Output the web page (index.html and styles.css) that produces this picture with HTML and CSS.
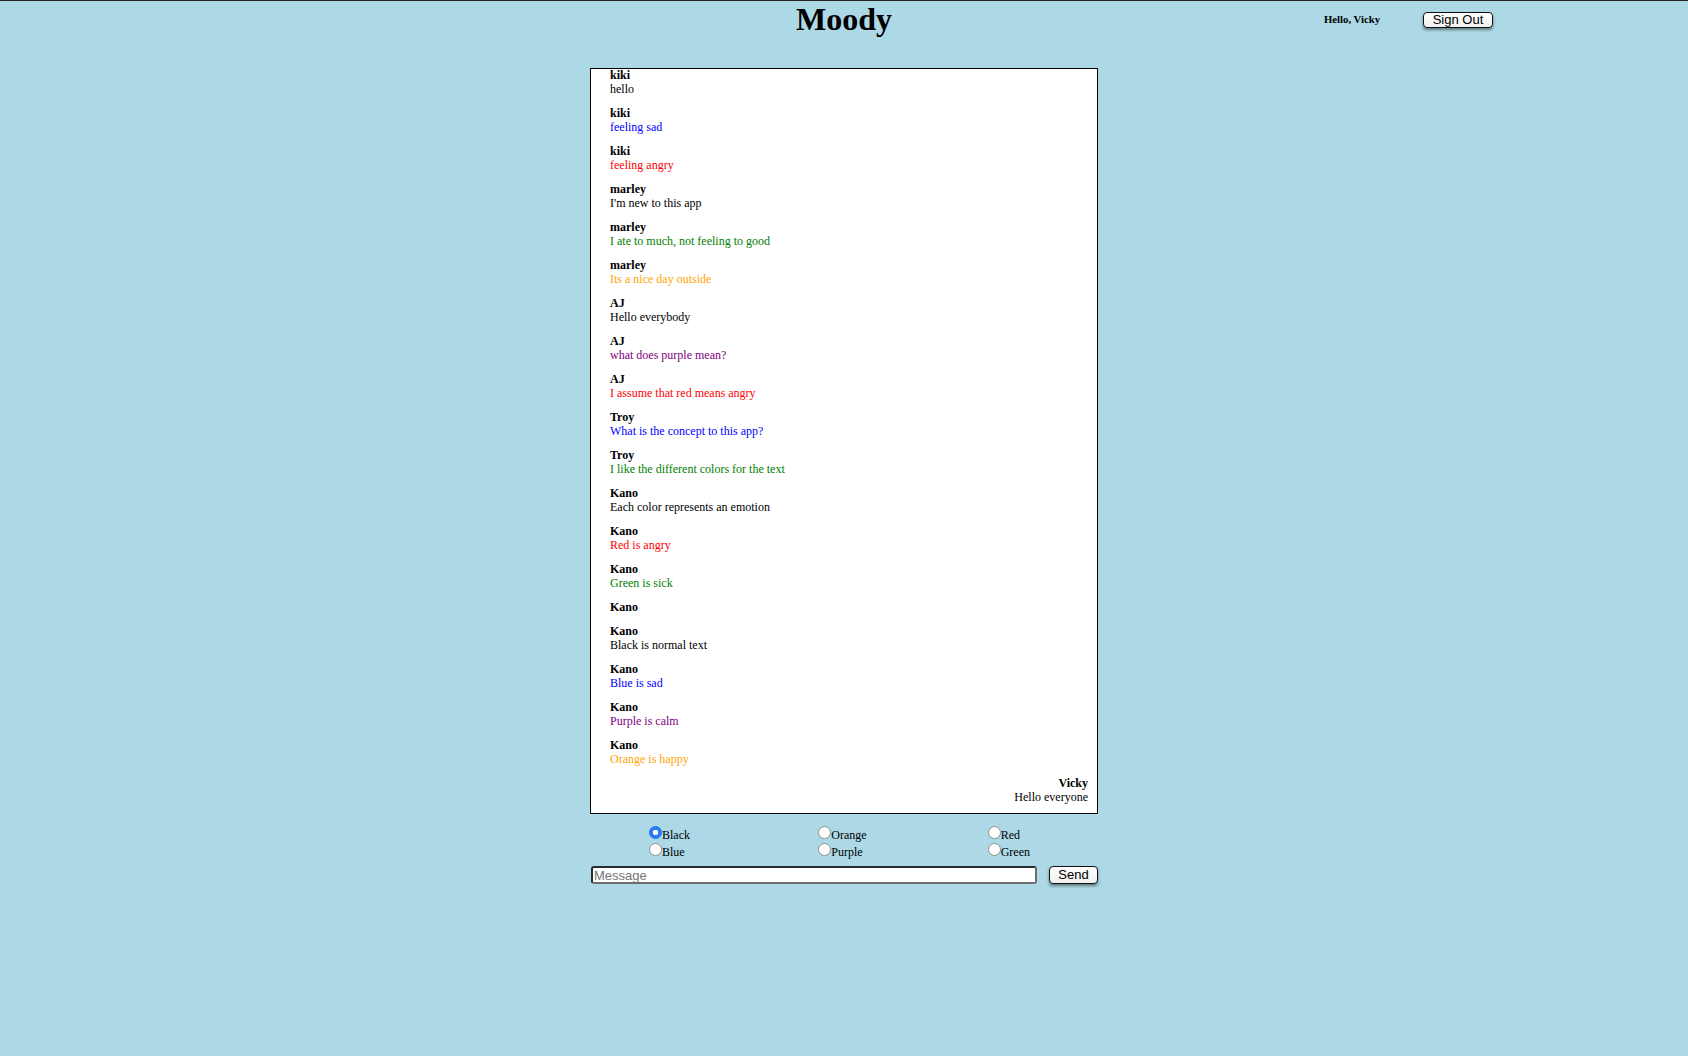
FILE: index.html
```html
<!DOCTYPE html>
<html lang="en">
<head>
<meta charset="utf-8">
<title>Moody</title>
<link rel="stylesheet" href="styles.css">
</head>
<body>
<header class="topbar">
  <div class="side"></div>
  <h1 class="title">Moody</h1>
  <div class="side user">
    <h6 class="hello">Hello, Vicky</h6>
    <button class="btn signout" type="button">Sign Out</button>
  </div>
</header>
<main class="app">
  <section class="chat">
    <div class="msg"><div class="name">kiki</div><div class="text c-black">hello</div></div>
    <div class="msg"><div class="name">kiki</div><div class="text c-blue">feeling sad</div></div>
    <div class="msg"><div class="name">kiki</div><div class="text c-red">feeling angry</div></div>
    <div class="msg"><div class="name">marley</div><div class="text c-black">I'm new to this app</div></div>
    <div class="msg"><div class="name">marley</div><div class="text c-green">I ate to much, not feeling to good</div></div>
    <div class="msg"><div class="name">marley</div><div class="text c-orange">Its a nice day outside</div></div>
    <div class="msg"><div class="name">AJ</div><div class="text c-black">Hello everybody</div></div>
    <div class="msg"><div class="name">AJ</div><div class="text c-purple">what does purple mean?</div></div>
    <div class="msg"><div class="name">AJ</div><div class="text c-red">I assume that red means angry</div></div>
    <div class="msg"><div class="name">Troy</div><div class="text c-blue">What is the concept to this app?</div></div>
    <div class="msg"><div class="name">Troy</div><div class="text c-green">I like the different colors for the text</div></div>
    <div class="msg"><div class="name">Kano</div><div class="text c-black">Each color represents an emotion</div></div>
    <div class="msg"><div class="name">Kano</div><div class="text c-red">Red is angry</div></div>
    <div class="msg"><div class="name">Kano</div><div class="text c-green">Green is sick</div></div>
    <div class="msg"><div class="name">Kano</div></div>
    <div class="msg"><div class="name">Kano</div><div class="text c-black">Black is normal text</div></div>
    <div class="msg"><div class="name">Kano</div><div class="text c-blue">Blue is sad</div></div>
    <div class="msg"><div class="name">Kano</div><div class="text c-purple">Purple is calm</div></div>
    <div class="msg"><div class="name">Kano</div><div class="text c-orange">Orange is happy</div></div>
    <div class="msg mine"><div class="name">Vicky</div><div class="text c-black">Hello everyone</div></div>
  </section>
  <form class="composer">
    <div class="colors">
      <label class="opt"><input type="radio" name="color" checked>Black</label>
      <label class="opt"><input type="radio" name="color">Orange</label>
      <label class="opt"><input type="radio" name="color">Red</label>
      <label class="opt"><input type="radio" name="color">Blue</label>
      <label class="opt"><input type="radio" name="color">Purple</label>
      <label class="opt"><input type="radio" name="color">Green</label>
    </div>
    <div class="sendrow">
      <input class="field" type="text" placeholder="Message">
      <button class="btn send" type="button">Send</button>
    </div>
  </form>
</main>
</body>
</html>
```
FILE: styles.css
```css
html, body {
  margin: 0;
  padding: 0;
}
body {
  background: #add8e6;
  border-top: 1px solid #222;
  font-family: "Liberation Serif", "Times New Roman", serif;
  font-size: 12px;
  line-height: 14px;
  color: #000;
  min-height: 1055px;
}
.topbar {
  display: grid;
  grid-template-columns: 1fr auto 1fr;
  height: 34px;
}
.title {
  margin: 0;
  padding-top: 1px;
  font-size: 32px;
  line-height: 34px;
  font-weight: bold;
  text-align: center;
}
.user {
  display: flex;
  justify-content: flex-end;
  align-items: flex-start;
  padding-top: 11px;
  padding-right: 195px;
  gap: 43px;
}
.hello {
  margin: 1px 0 0;
  font-size: 10.72px;
  line-height: 13px;
  font-weight: bold;
}
.btn {
  font-family: "Liberation Sans", Arial, sans-serif;
  font-size: 13px;
  line-height: 14px;
  height: 16px;
  padding: 0 8px;
  border: 1px solid #111;
  border-radius: 4px;
  background: linear-gradient(#ffffff, #f0f0f0);
  box-shadow: 0 2px 3px rgba(0, 0, 0, 0.45);
  color: #000;
  margin: 0;
}
.signout {
  width: 70px;
}
.app {
  width: 508px;
  margin: 33px auto 0;
}
.chat {
  box-sizing: border-box;
  height: 746px;
  border: 1px solid #000;
  background: #fff;
  overflow: hidden;
  display: flex;
  flex-direction: column;
  justify-content: flex-end;
  gap: 10px;
  padding: 0 9px 9px 19px;
}
.msg {
  flex: none;
}
.name {
  font-weight: bold;
}
.mine {
  text-align: right;
}
.c-black { color: #000; }
.c-blue { color: #0000ff; }
.c-red { color: #ff0000; }
.c-green { color: #008000; }
.c-orange { color: #ffa500; }
.c-purple { color: #800080; }
.composer {
  margin: 12px 0 0;
}
.colors {
  display: grid;
  grid-template-columns: repeat(3, 1fr);
  grid-auto-rows: 17px;
}
.opt {
  display: block;
  padding-left: 59px;
  line-height: 14px;
}
.opt input {
  -webkit-appearance: none;
  appearance: none;
  width: 13px;
  height: 13px;
  margin: 0;
  box-sizing: border-box;
  border: 1px solid #8e8e8e;
  border-radius: 50%;
  background: #fff;
  vertical-align: baseline;
}
.opt input:checked {
  border-color: #1c6fe8;
  background: radial-gradient(circle, #fff 0 2.4px, #2a7cf7 3px);
}
.sendrow {
  display: flex;
  align-items: flex-start;
  gap: 12px;
  margin-top: 6px;
}
.field {
  box-sizing: border-box;
  width: 446px;
  height: 18px;
  margin: 0 0 0 1px;
  padding: 0 1px;
  border: 2px solid #2b2b2b;
  border-bottom-color: #6d6d6d;
  border-right-color: #6d6d6d;
  border-radius: 3px;
  background: #fff;
  font-family: "Liberation Sans", Arial, sans-serif;
  font-size: 13px;
  line-height: 14px;
}
.field::placeholder {
  color: #757575;
}
.send {
  width: 49px;
  height: 18px;
  padding: 0;
}
```
